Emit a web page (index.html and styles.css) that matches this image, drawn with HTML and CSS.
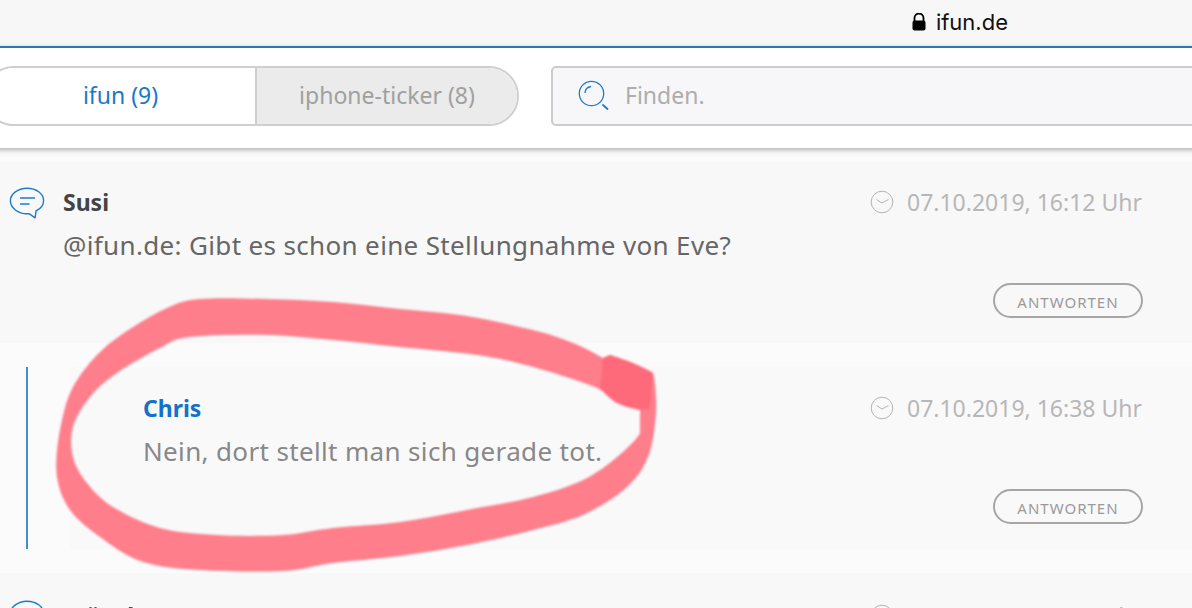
FILE: index.html
```html
<!DOCTYPE html>
<html>
<head>
  <title>ifun Kommentare</title>
  <link rel="stylesheet" href="styles.css">
</head>
<body>
  <div class="address-bar">
    <svg class="lock" viewBox="0 0 14 18" width="14" height="18"><path d="M2.500 8V5a4.500 4.500 0 0 1 9 0v3" fill="none" stroke="#000" stroke-width="1.800"/><rect x="0.500" y="7.500" width="13" height="10" rx="2" fill="#000"/></svg>
    <span>ifun.de</span>
  </div>

  <div class="header">
    <div class="tabs">
      <div class="tab active">ifun (9)</div>
      <div class="tab">iphone-ticker (8)</div>
    </div>
    <div class="search">
      <svg class="search-icon" viewBox="0 0 32 30" width="32" height="30"><circle cx="13.500" cy="13.500" r="12.200" fill="none" stroke="#1a7ccb" stroke-width="1.300"/><path d="M7 13a7 7 0 0 1 6-6.500" fill="none" stroke="#1a7ccb" stroke-width="1.300"/><path d="M25 25l4.500 4" stroke="#1a7ccb" stroke-width="1.800" stroke-linecap="round"/></svg>
      <span>Finden.</span>
    </div>
  </div>

  <div class="comment">
    <svg class="bubble" viewBox="0 0 36 32" width="36" height="32"><path d="M18 1.200c9 0 16.600 5.400 16.600 12.400 0 4.600-3 8.300-7.600 10.400l-.8 6.800-6.200-4.200c-.7.100-1.300.1-2 .1C9 26.700 1.400 21 1.400 13.800 1.400 6.800 9 1.200 18 1.200z" fill="none" stroke="#1a7ccb" stroke-width="1.400" stroke-linejoin="round"/><path d="M11.500 11h14M11.500 17h8.500" stroke="#1a7ccb" stroke-width="1.400" stroke-linecap="round"/></svg>
    <div class="comment-top">
      <div class="name">Susi</div>
      <div class="date">
        <svg class="clock" viewBox="0 0 24 24" width="24" height="24"><circle cx="12" cy="12" r="10.800" fill="none" stroke="#b4b4b4" stroke-width="1"/><path d="M6.500 9.500l5.500 3.500 6.500-3.500" fill="none" stroke="#b4b4b4" stroke-width="1"/></svg>
        07.10.2019, 16:12 Uhr
      </div>
    </div>
    <div class="text">@ifun.de: Gibt es schon eine Stellungnahme von Eve?</div>
    <div class="actions"><button class="reply-btn">ANTWORTEN</button></div>
  </div>

  <div class="reply-wrap">
    <div class="reply">
      <div class="comment-top">
        <div class="name blue">Chris</div>
        <div class="date">
          <svg class="clock" viewBox="0 0 24 24" width="24" height="24"><circle cx="12" cy="12" r="10.800" fill="none" stroke="#b4b4b4" stroke-width="1"/><path d="M6.500 9.500l5.500 3.500 6.500-3.500" fill="none" stroke="#b4b4b4" stroke-width="1"/></svg>
          07.10.2019, 16:38 Uhr
        </div>
      </div>
      <div class="text grey">Nein, dort stellt man sich gerade tot.</div>
      <div class="actions"><button class="reply-btn">ANTWORTEN</button></div>
    </div>
  </div>

  <div class="comment next">
    <svg class="bubble" viewBox="0 0 36 32" width="36" height="32"><path d="M18 1.200c9 0 16.600 5.400 16.600 12.400 0 4.600-3 8.300-7.600 10.400l-.8 6.800-6.200-4.200c-.7.100-1.300.1-2 .1C9 26.700 1.400 21 1.400 13.800 1.400 6.800 9 1.200 18 1.200z" fill="none" stroke="#1a7ccb" stroke-width="1.400"/></svg>
    <div class="comment-top">
      <div class="name">münch</div>
      <div class="date">
        <svg class="clock" viewBox="0 0 24 24" width="24" height="24"><circle cx="12" cy="12" r="10.800" fill="none" stroke="#b4b4b4" stroke-width="1"/></svg>
        07.10.2019, 10:34 Uhr
      </div>
    </div>
  </div>

  <!-- red marker scribble on top of the screenshot -->
  <svg class="scribble" viewBox="0 0 1192 608" width="1192" height="608">
    <path class="stroke" fill-rule="evenodd" d="M200 299C217 297.500 245 298.500 267 299C289 299.500 311 300.300 333 302C355 303.700 378 306.700 400 309C422 311.300 445 312.500 467 316C489 319.500 515 325.500 533 330C551 334.500 561 338.300 573 343C585 347.700 596 354 603 358L610 355C616 357 626 360 633 363C640 366 648 370 653 373C655 378 657 399 656 413C655 427 653 445 648 457C643 469 638 477 627 487C616 497 599 508 583 515C567 522 552 525 533 530C514 535 489 541 467 545C445 549 422 553 400 556C378 559 353 560.500 333 563C313 565.500 305 570 283 571C261 572 223 571.500 200 570C177 568.500 160 567.500 143 562C126 556.500 112 545.700 100 537C88 528 77 520 70 510C63 500 59 490 57 477C55 464 57 445 60 430C63 415 66 400 73 387C80 374 90 362 100 352C110 342 122 334 133 327C144 320 156 313 167 308C178 303 183 300.500 200 299Z M190 337C208 335 243 334.500 267 335C291 335.500 311 338 333 340C355 342 376 344.500 400 347C424 349.500 455 351.700 477 355C499 358.300 513 361.500 533 367C553 372.500 583 382 597 388C611 394 610 399.300 617 403C624 406.700 632 408 640 410L640 433C638 438 626.500 449.200 617 457C607.500 464.800 597 473.300 583 480C569 486.700 552 492 533 497C514 502 489 505.800 467 510C445 514.200 422 519 400 522C378 525 352.500 525.800 333 528C313.500 530.200 302 533.800 283 535C264 536.200 237.500 536.200 217 535C196.500 533.800 177.300 532.700 160 528C142.700 523.300 125.200 514.500 113 507C100.800 499.500 93.700 491.300 87 483C80.300 474.700 75.300 466.300 73 457C70.700 447.700 70.200 437 73 427C75.800 417 82.700 406 90 397C97.300 388 105.300 381.200 117 373C128.700 364.800 147.800 354 160 348C172.200 342 172 339.200 190 337Z"/>
    <path class="overlap" d="M603 358L610 355C616 357 626 360 633 363C640 366 648 370 653 373L650 409L640 410C632 408 624 406.700 617 403C610 399.300 606 394 600 389Z"/>
  </svg>
</body>
</html>
```

FILE: styles.css
```css
body {
  font-family: "Noto Sans", "Open Sans", sans-serif;
  margin: 0;
  width: 1192px;
  height: 608px;
  overflow: hidden;
  position: relative;
  background-color: #fbfbfb;
}
.address-bar {
  height: 46px;
  box-sizing: border-box;
  display: flex;
  align-items: center;
  justify-content: flex-end;
  gap: 10px;
  padding-right: 184px;
  padding-bottom: 2px;
  background-color: #f8f7f8;
  font-family: Inter, sans-serif;
  font-size: 22px;
  color: #111;
}
.header {
  height: 102px;
  box-sizing: border-box;
  display: flex;
  align-items: center;
  gap: 32px;
  margin-left: -16px;
  margin-right: -10px;
  padding-bottom: 4px;
  border-top: 2px solid #2a78b8;
  background-color: white;
  box-shadow: 0 2px 5px rgba(0,0,0,0.3);
  position: relative;
}
.tabs {
  display: flex;
  width: 535px;
  height: 60px;
  box-sizing: border-box;
  border: 2px solid #cfcfcf;
  border-radius: 30px;
  overflow: hidden;
  flex: none;
}
.tab {
  flex: 1;
  display: flex;
  align-items: center;
  justify-content: center;
  padding-bottom: 2px;
  font-size: 23px;
  color: #a0a0a0;
  background-color: #ebebeb;
}
.tab.active {
  flex: none;
  width: 269px;
  color: #1a78c9;
  background-color: white;
  border-right: 2px solid #cfcfcf;
}
.search {
  flex: 1;
  height: 60px;
  box-sizing: border-box;
  display: flex;
  align-items: center;
  gap: 15px;
  padding-left: 25px;
  padding-bottom: 2px;
  border: 2px solid #cccccc;
  border-radius: 5px;
  background-color: #f7f7f9;
  font-size: 23px;
  color: #adadad;
}
.comment {
  margin-top: 14px;
  height: 181px;
  box-sizing: border-box;
  padding: 23px 50px 0 63px;
  background-color: #f8f8f8;
  position: relative;
}
.comment.next {
  margin-top: 0;
  height: 35px;
  padding-top: 26px;
  overflow: hidden;
}
.bubble {
  position: absolute;
  left: 9px;
  top: 25px;
}
.comment.next .bubble {
  top: 27px;
}
.comment-top {
  display: flex;
  justify-content: space-between;
  align-items: center;
  height: 34px;
}
.name {
  font-size: 23px;
  font-weight: bold;
  color: #444;
}
.name.blue {
  color: #1272c8;
}
.date {
  display: flex;
  align-items: center;
  gap: 13px;
  font-size: 23px;
  color: #b7b7b7;
}
.text {
  font-size: 26px;
  letter-spacing: 0.35px;
  line-height: 34px;
  margin-top: 9px;
  color: #666;
}
.text.grey {
  color: #888;
}
.actions {
  display: flex;
  justify-content: flex-end;
  margin-top: 21px;
  margin-right: -1px;
}
.reply-btn {
  width: 150px;
  height: 35px;
  box-sizing: border-box;
  padding: 3px 0 0;
  border: 2px solid #a6a6a6;
  border-radius: 18px;
  background: transparent;
  font-family: "Noto Sans", "Open Sans", sans-serif;
  font-size: 15px;
  letter-spacing: 1px;
  color: #9a9a9a;
}
.reply-wrap {
  height: 230px;
  box-sizing: border-box;
  padding: 24px 0 24px 26px;
}
.reply {
  height: 182px;
  box-sizing: border-box;
  padding: 24px 50px 0 115px;
  border-left: 2px solid #3f8fd2;
  background: linear-gradient(to right, #fbfbfb 42px, #f9f9fa 42px);
}
.scribble {
  position: absolute;
  left: 0;
  top: 0;
  pointer-events: none;
  filter: blur(0.8px);
}
.scribble .stroke {
  fill: #ff7e8b;
}
.scribble .overlap {
  fill: #ff6a7a;
}
```
